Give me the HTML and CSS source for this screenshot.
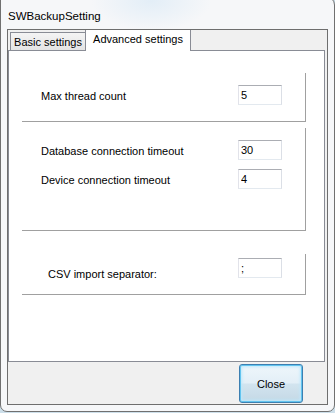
FILE: index.html
```html
<!DOCTYPE html>
<html lang="en">
<head>
  <meta charset="UTF-8" />
  <title>SWBackupSetting</title>
  <link rel="stylesheet" href="styles.css">
</head>
<body>
  <div class="window">
    <!-- title bar -->
    <div class="titlebar">SWBackupSetting</div>

    <div class="client">
      <!-- tabs -->
      <div class="tabs">
        <div class="tab">Basic settings</div>
        <div class="tab active">Advanced settings</div>
      </div>

      <!-- advanced settings pane -->
      <div class="pane">
        <div class="group group-thread">
          <div class="row">
            <label>Max thread count</label>
            <input type="text" value="5">
          </div>
        </div>

        <div class="group group-timeout">
          <div class="row">
            <label>Database connection timeout</label>
            <input type="text" value="30">
          </div>
          <div class="row">
            <label>Device connection timeout</label>
            <input type="text" value="4">
          </div>
        </div>

        <div class="group group-csv">
          <div class="row row-low">
            <label>CSV import separator:</label>
            <input type="text" value=";">
          </div>
        </div>
      </div>

      <!-- bottom buttons -->
      <div class="footer">
        <button class="btn-default">Close</button>
      </div>
    </div>
  </div>
</body>
</html>
```

FILE: styles.css
```css
body, input, button {
  font-family: 'Liberation Sans', Arial, sans-serif;
}
body {
  margin: 0;
  background: #cddfea;
  overflow: hidden;
  color: #000;
  font-size: 11px;
}

/* === okno === */
.window {
  width: 335px;
  height: 416px;
  margin-top: -4px;
  box-sizing: border-box;
  border: 1px solid #707070;
  border-radius: 0 9px 7px 7px;
  padding: 0 6px;
  background: radial-gradient(ellipse 60px 30px at 150px 4px, #e3eef7, rgba(246, 247, 249, 0)), #f6f7f9;
  display: flex;
  flex-direction: column;
}
.titlebar {
  height: 32px;
  box-sizing: border-box;
  padding: 12px 0 0 1px;
  font-size: 11.5px;
  line-height: 14px;
}
.client {
  height: 376px;
  box-sizing: border-box;
  border: 1px solid #6e6e6e;
  background: #f0f0f0;
  display: flex;
  flex-direction: column;
}

/* === záložky === */
.tabs {
  display: flex;
  align-items: flex-end;
  height: 20px;
  padding-left: 2px;
}
.tab {
  width: 75px;
  height: 18px;
  box-sizing: border-box;
  border: 1px solid #898c95;
  border-bottom: none;
  border-right: none;
  background: linear-gradient(#f4f4f4, #e4e4e4);
  text-align: center;
  line-height: 14px;
  padding-top: 2px;
}
.tab.active {
  width: 106px;
  height: 21px;
  margin-bottom: -1px;
  border-top: none;
  border-right: 1px solid #898c95;
  background: #fff;
  position: relative;
  z-index: 1;
  padding-top: 2px;
}
.pane {
  height: 312px;
  margin-right: 2px;
  box-sizing: border-box;
  border: 1px solid #898c95;
  background: #fff;
  padding: 22px 0 0 13px;
}

/* === skupiny === */
.group {
  width: 284px;
  box-sizing: border-box;
  border-right: 1px solid #a0a0a0;
  border-bottom: 1px solid #a0a0a0;
  padding: 12px 23px 0 19px;
  display: flex;
  flex-direction: column;
  gap: 9px;
}
.group-thread {
  height: 49px;
}
.group-timeout {
  height: 103px;
  margin-top: 6px;
}
.group-csv {
  height: 41px;
  margin-top: 23px;
  padding-top: 4px;
  padding-left: 26px;
}
.row {
  display: flex;
  align-items: center;
}
.row label {
  line-height: 14px;
  padding-top: 2px;
}
.row input {
  margin: 0 0 0 auto;
  width: 44px;
  height: 20px;
  box-sizing: border-box;
  border: 1px solid;
  border-color: #abadb3 #dbdfe6 #e3e9ef #e2e3ea;
  padding: 0 0 0 2px;
  font-size: 11px;
  color: #000;
  outline: none;
}
.row-low {
  align-items: flex-start;
}
.row-low label {
  margin-top: 7px;
}

/* === tlačítko close === */
.footer {
  height: 42px;
  display: flex;
  justify-content: flex-end;
  padding: 2px 24px 0 0;
  box-sizing: border-box;
}
.btn-default {
  width: 64px;
  height: 39px;
  margin: 0;
  border: 1px solid #3c7fb1;
  border-radius: 3px;
  background: linear-gradient(#eef6fb, #e3eff7 48%, #d2e4ef 52%, #c4d8e5);
  box-shadow: inset 0 0 0 1px #62c4ef, inset 0 0 3px 2px #bde8fb;
  font-size: 11px;
  color: #000;
  padding: 0;
}
```
